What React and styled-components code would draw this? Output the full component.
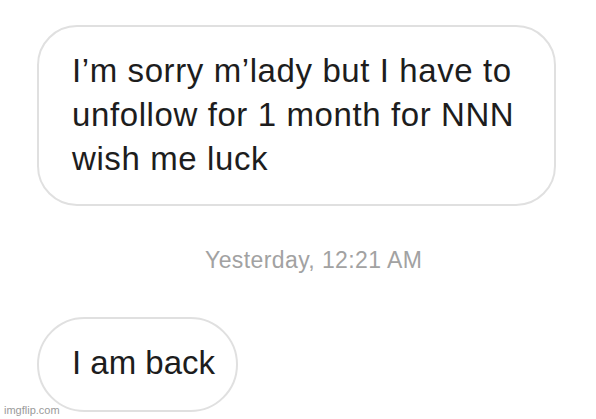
import React from 'react';
import styled, { createGlobalStyle } from 'styled-components';

const GlobalStyle = createGlobalStyle`
  html, body {
    margin: 0;
    padding: 0;
    background: #fff;
  }
  body {
    font-family: "Liberation Sans", Arial, sans-serif;
  }
`;

const StyledPage = styled.div`
  position: relative;
  width: 596px;
  height: 419px;
  overflow: hidden;
  background: #fff;
  display: flex;
  flex-direction: column;
  align-items: flex-start;
  padding: 25px 0 0 37px;
  box-sizing: border-box;
`;

const StyledBubble = styled.div`
  box-sizing: border-box;
  width: ${({ width }) => width}px;
  height: ${({ height }) => height}px;
  border: 2px solid #e0e0e0;
  border-radius: ${({ radius }) => radius}px;
  padding: ${({ pad }) => pad};
  color: #1d1d1d;
  font-size: ${({ size }) => size}px;
  line-height: 44px;
  letter-spacing: ${({ spacing }) => spacing || 0}px;
  white-space: nowrap;
`;

const StyledTime = styled.div`
  margin: 41px 0 0 168px;
  font-size: 23px;
  line-height: 26px;
  letter-spacing: 0.4px;
  color: #a2a2a2;
`;

const StyledSpacer = styled.div`
  height: 44px;
`;

const StyledWatermark = styled.div`
  position: absolute;
  left: 4px;
  bottom: 3px;
  font-size: 11px;
  color: #9a9a9a;
`;

const App = () => (
  <>
    <GlobalStyle />
    <StyledPage>
      <StyledBubble width={519} height={181} radius={40} pad="22px 0 0 33px" size={33} spacing={0.6}>
        I’m sorry m’lady but I have to
        <br />
        unfollow for 1 month for NNN
        <br />
        wish me luck
      </StyledBubble>
      <StyledTime>Yesterday, 12:21 AM</StyledTime>
      <StyledSpacer />
      <StyledBubble width={201} height={95} radius={48} pad="22px 0 0 33px" size={33}>
        I am back
      </StyledBubble>
      <StyledWatermark>imgflip.com</StyledWatermark>
    </StyledPage>
  </>
);

export default App;
